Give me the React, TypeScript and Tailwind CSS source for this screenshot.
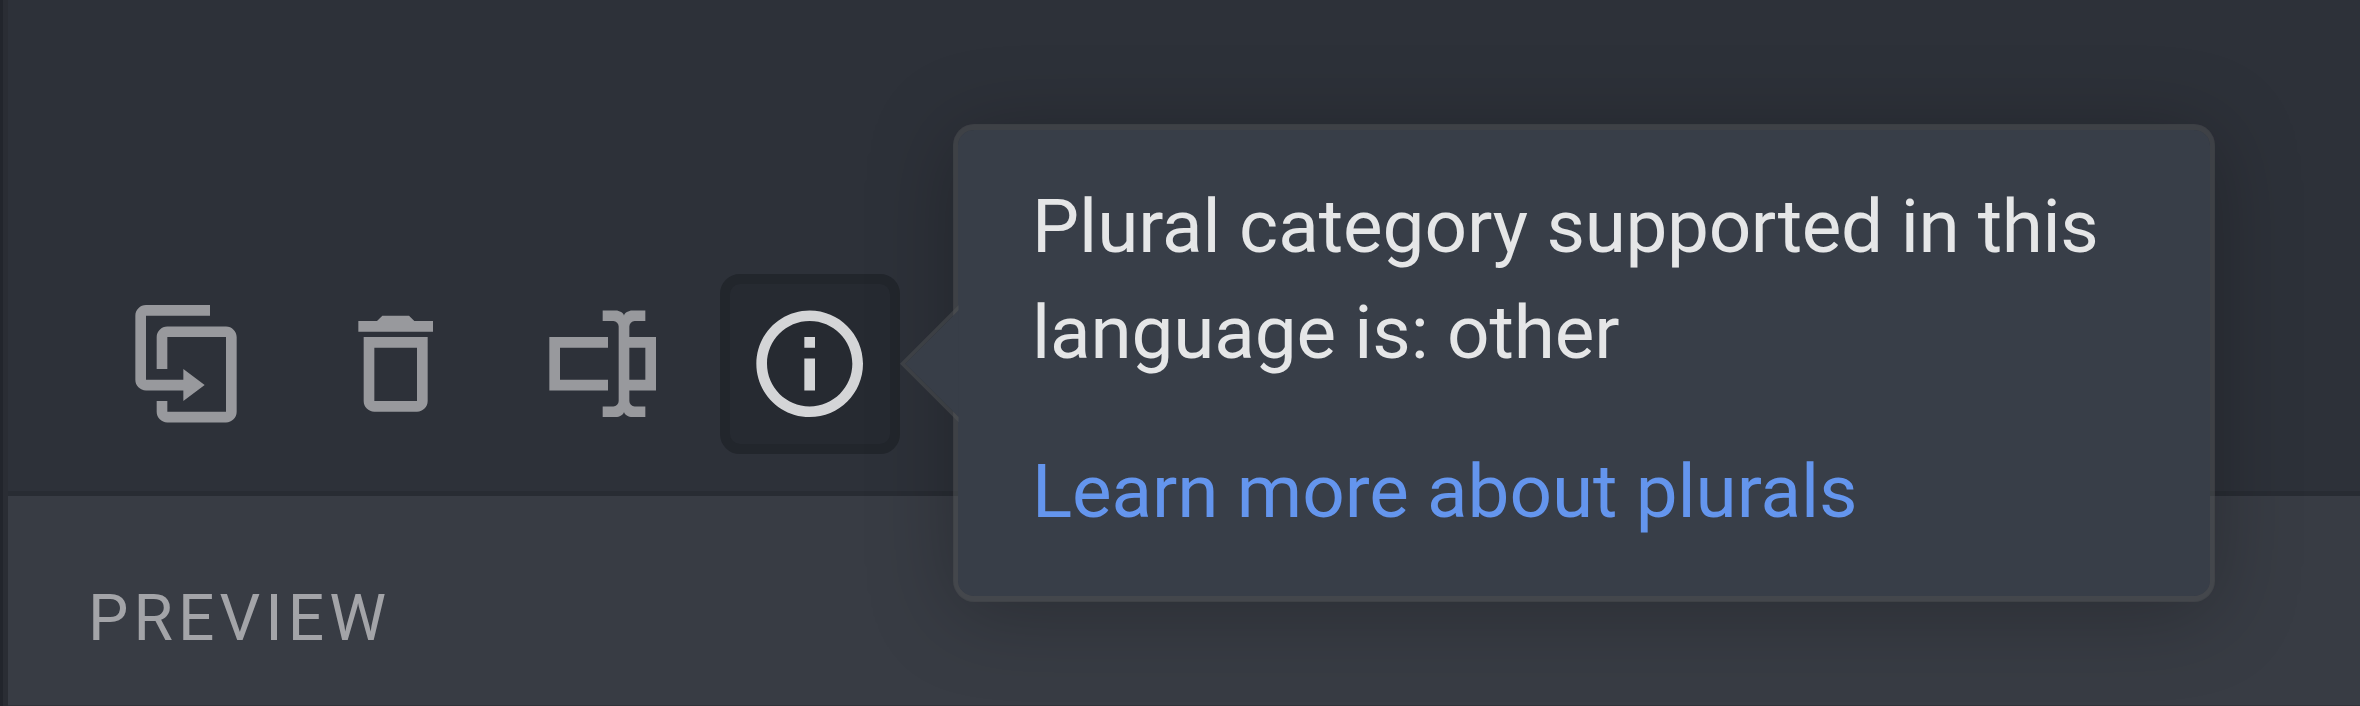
import type { ReactNode } from "react";

function Icon({ d, className }: { d: string; className: string }) {
  return (
    <svg
      viewBox="0 0 24 24"
      className={`h-32 w-32 shrink-0 -translate-x-[0.33px] -translate-y-[0.25px] ${className}`}
      fill="currentColor"
    >
      <path d={d} />
    </svg>
  );
}

const DUPLICATE =
  "M16 1H4C2.9 1 2 1.9 2 3v12c0 1.1.9 2 2 2h7v2l4-3-4-3v2H4V3h12V1zM19 5H8c-1.1 0-2 .9-2 2v6h2V7h11v14H8v-2H6v2c0 1.1.9 2 2 2h11c1.1 0 2-.9 2-2V7c0-1.1-.9-2-2-2z";
const TRASH =
  "M6 19c0 1.1.9 2 2 2h8c1.1 0 2-.9 2-2V7H6v12zM8 9h8v10H8V9zm7.5-5l-1-1h-5l-1 1H5v2h14V4h-3.5z";
const RENAME =
  "M17,7H22V17H17V19A1,1 0 0,0 18,20H20V22H17.5C16.95,22 16,21.55 16,21C16,21.55 15.05,22 14.5,22H12V20H14A1,1 0 0,0 15,19V5A1,1 0 0,0 14,4H12V2H14.5C15.05,2 16,2.45 16,3C16,2.45 16.95,2 17.5,2H20V4H18A1,1 0 0,0 17,5V7M2,7H13V9H4V15H13V17H2V7M20,15V9H17V15H20Z";
const INFO =
  "M11 7h2v2h-2zM11 11h2v6h-2zM12 2C6.48 2 2 6.48 2 12s4.48 10 10 10 10-4.48 10-10S17.52 2 12 2zm0 18c-4.41 0-8-3.59-8-8s3.59-8 8-8 8 3.59 8 8-3.59 8-8 8z";

function ToolButton({ active = false, children }: { active?: boolean; children: ReactNode }) {
  return (
    <button
      className={`flex h-[180px] w-[180px] items-center justify-center rounded-[20px] border-10 ${
        active ? "border-[#22262c] bg-[#262a31]" : "border-transparent"
      }`}
    >
      {children}
    </button>
  );
}

function Tooltip() {
  return (
    <div className="absolute -top-[150px] left-[233px] h-[478px] w-[1262px] rounded-[21.33px] border-x-5 border-y-6 border-[#515356]/48 bg-[#383e48] bg-clip-padding pt-[44.4px] pl-[74px] text-[74.67px] leading-[106px] text-[#e5e6e7] shadow-[0_10.67px_85.33px_rgba(0,0,0,0.25)]">
      <p className="whitespace-nowrap">
        <span className="tracking-[-0.06px]">Plural category </span>
        <span className="tracking-[-0.36px]">supported in this</span>
        <br />
        <span className="tracking-[-0.15px]">language is: other</span>
      </p>
      <a className="mt-[53px] block whitespace-nowrap tracking-[-0.1px] text-[#6495ed]">Learn more about plurals</a>
      <svg
        viewBox="0 0 58.67 117.33"
        className="absolute top-[174.7px] -left-[58px] h-[117.33px] w-[58.67px]"
      >
        <path d="M0 58.67 58.67 0V5.33L5.33 58.67 58.67 112V117.33Z" className="fill-[#515356]/48" />
        <path d="M5.33 58.67 58.67 5.33V112Z" className="fill-[#383e48]" />
      </svg>
    </div>
  );
}

export default function App() {
  return (
    <div className="flex h-[706px] w-[2360px] overflow-hidden bg-[#2d3139] font-[Roboto,sans-serif]">
      <div className="w-[3px] bg-[#22252c]" />
      <div className="w-[5px] bg-[#2a2d34]" />
      <main className="flex flex-1 flex-col">
        <div className="flex h-[491px] items-start gap-[27px] pt-[274px] pl-[91px]">
          <ToolButton>
            <Icon d={DUPLICATE} className="text-[#98999d]" />
          </ToolButton>
          <ToolButton>
            <Icon d={TRASH} className="text-[#98999d]" />
          </ToolButton>
          <ToolButton>
            <Icon d={RENAME} className="text-[#98999d]" />
          </ToolButton>
          <div className="relative z-10">
            <ToolButton active>
              <Icon d={INFO} className="text-[#d4d5d7]" />
            </ToolButton>
            <Tooltip />
          </div>
        </div>
        <section className="flex-1 border-t-5 border-b border-t-[#282c33] border-b-[#303339] bg-[#383c44] pt-[80px] pl-[80px]">
          <h2 className="text-[64px] leading-[85px] tracking-[5.1px] text-[#a3a4a8]">PREVIEW</h2>
        </section>
      </main>
    </div>
  );
}
